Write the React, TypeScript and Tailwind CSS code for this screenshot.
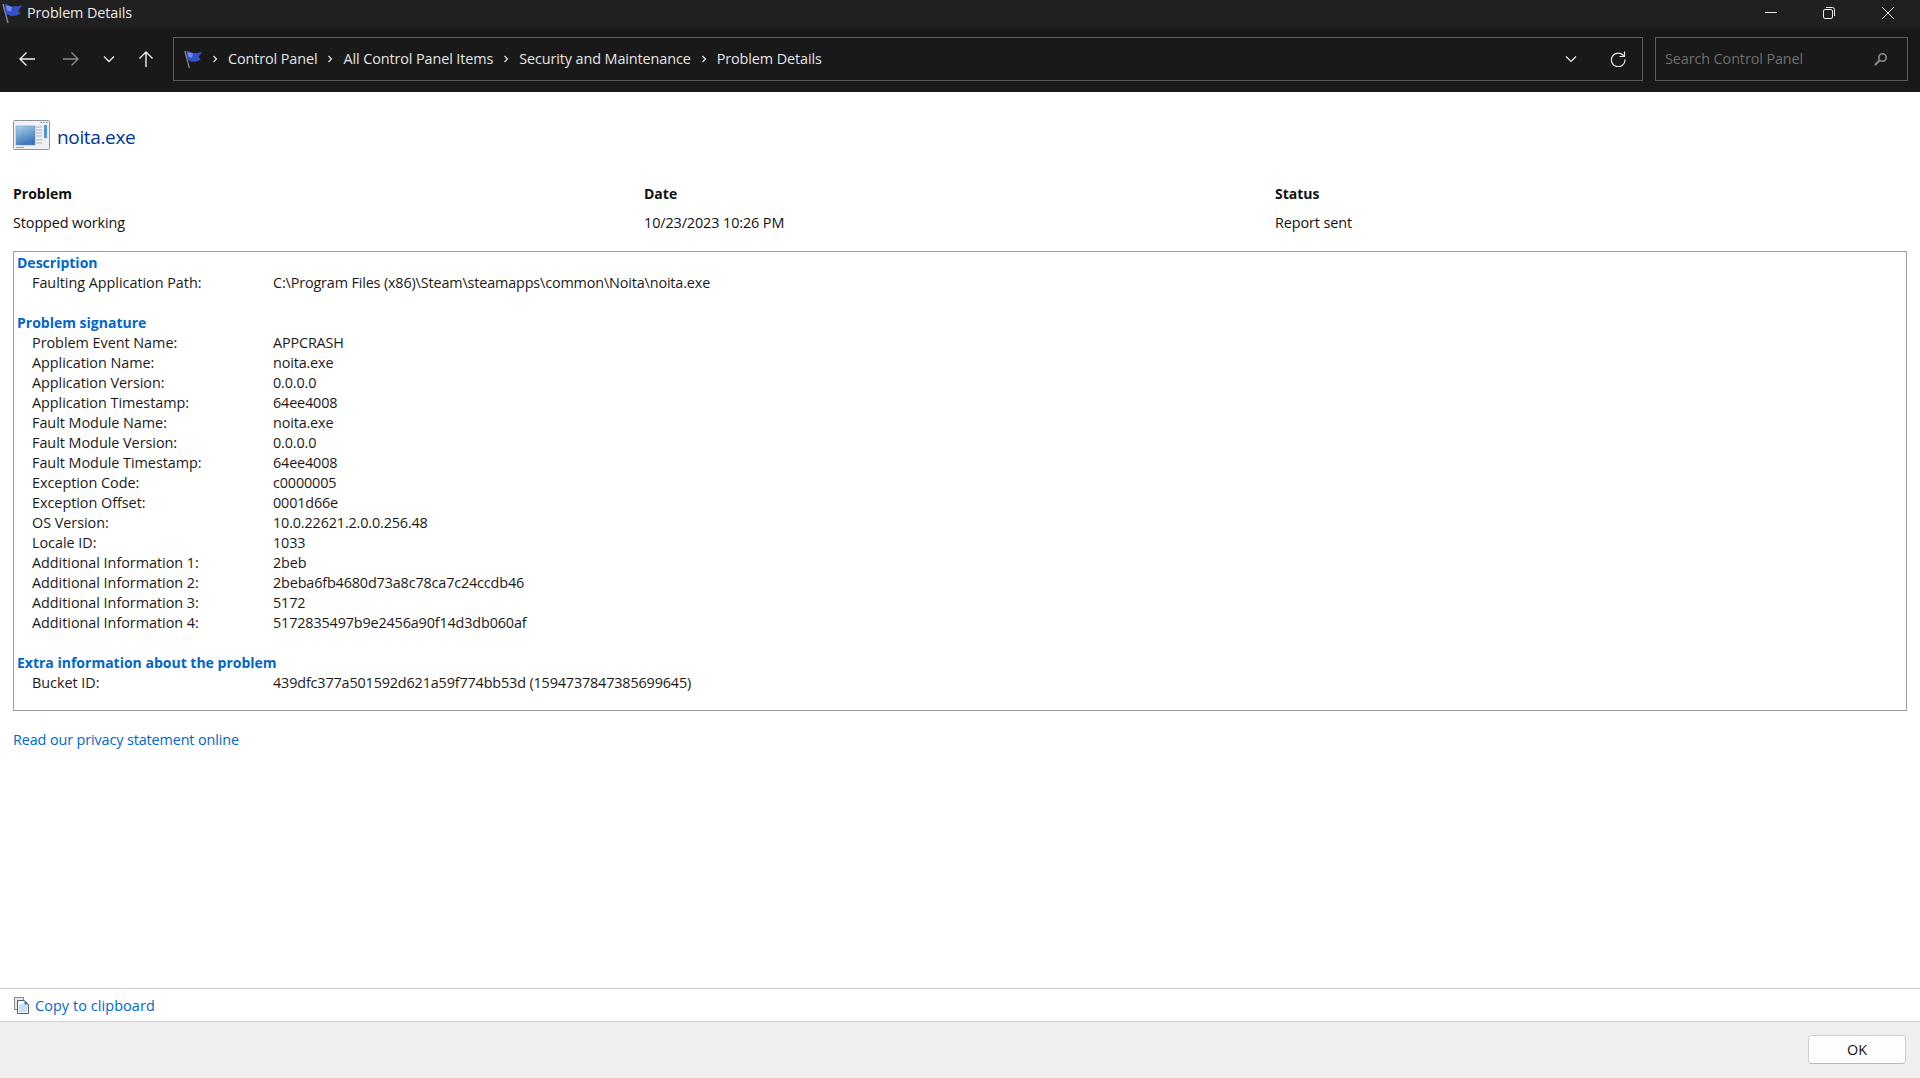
const FONT = "font-['Open_Sans','Noto_Sans',sans-serif]";

const DESCRIPTION = [["Faulting Application Path:", "C:\\Program Files (x86)\\Steam\\steamapps\\common\\Noita\\noita.exe"]];

const SIGNATURE = [
  ["Problem Event Name:", "APPCRASH"],
  ["Application Name:", "noita.exe"],
  ["Application Version:", "0.0.0.0"],
  ["Application Timestamp:", "64ee4008"],
  ["Fault Module Name:", "noita.exe"],
  ["Fault Module Version:", "0.0.0.0"],
  ["Fault Module Timestamp:", "64ee4008"],
  ["Exception Code:", "c0000005"],
  ["Exception Offset:", "0001d66e"],
  ["OS Version:", "10.0.22621.2.0.0.256.48"],
  ["Locale ID:", "1033"],
  ["Additional Information 1:", "2beb"],
  ["Additional Information 2:", "2beba6fb4680d73a8c78ca7c24ccdb46"],
  ["Additional Information 3:", "5172"],
  ["Additional Information 4:", "5172835497b9e2456a90f14d3db060af"],
];

const EXTRA = [["Bucket ID:", "439dfc377a501592d621a59f774bb53d (1594737847385699645)"]];

const CRUMBS = ["Control Panel", "All Control Panel Items", "Security and Maintenance", "Problem Details"];

function Flag({ className }: { className: string }) {
  return (
    <svg className={className} viewBox="0 0 22 22">
      <path d="M2 2l5 19" stroke="#8a8a8a" strokeWidth="1.4" fill="none" />
      <path d="M3.5 2.5c3-1.5 5 2 8.5 2 3 0 6-1 9.5-1l-4.5 5 2.5 3c-3 2.5-7 2.5-9 2.5-2.5 0-3.5-2.5-5.5-1z" fill="#3450c8" />
      <path d="M5 4c2-1 4 1 6 1l-1 4.5c-2 0-3-1-4-1z" fill="#6f8cf0" />
    </svg>
  );
}

function Chevron({ className }: { className: string }) {
  return (
    <svg className={className} viewBox="0 0 6 8" fill="none" stroke="#e4e4e4" strokeWidth="1.2">
      <path d="M1.5 1l3 3-3 3" />
    </svg>
  );
}

function AppIcon() {
  return (
    <svg className="w-[38px] h-[31px] shrink-0" viewBox="0 0 38 31">
      <defs>
        <linearGradient id="pane" x1="0" y1="0" x2="0.4" y2="1">
          <stop offset="0" stopColor="#a9d2ee" />
          <stop offset="1" stopColor="#3f78b8" />
        </linearGradient>
      </defs>
      <rect x="0.5" y="0.5" width="36" height="29" rx="1" fill="#eef0f3" stroke="#8f959c" />
      <rect x="3" y="6" width="19" height="19" fill="url(#pane)" stroke="#6e8fb0" strokeWidth="0.5" />
      <path d="M23 7h6M23 10h6M23 13h6M23 16h6M23 20h6M23 23h6" stroke="#c3c7cc" strokeWidth="1.5" />
      <rect x="31" y="5" width="3" height="13" fill="#4f94d8" />
      <path d="M27 2.5h2M30 2.5h2M33 2.5h2M3 27.5h8" stroke="#9aa0a6" strokeWidth="1" />
    </svg>
  );
}

function ClipIcon() {
  return (
    <svg className="w-[16px] h-[17px] shrink-0" viewBox="0 0 16 17">
      <rect x="0.5" y="0.5" width="9" height="12" fill="#e8e8e8" stroke="#8b8b8b" />
      <path d="M3.5 3.5h7l4 4v9h-11z" fill="#fff" stroke="#4a5a78" />
      <path d="M10.5 3.5l4 4h-4z" fill="#3b6ea8" />
      <path d="M5 8h8M5 10h8M5 12h8M5 14h8" stroke="#8cc0ea" strokeWidth="1" />
    </svg>
  );
}

function Section({ title, rows }: { title: string; rows: string[][] }) {
  return (
    <div className="mb-[20px] last:mb-0">
      <div className="h-[20px] leading-[20px] pl-[3px] font-bold text-[#0066cc] text-[14px] tracking-normal">{title}</div>
      {rows.map(([label, value]) => (
        <div key={label} className="grid grid-cols-[241px_1fr] h-[20px] leading-[20px] pl-[18px] text-[#1a1a1a]">
          <span className="tracking-[-0.03px]">{label}</span>
          <span className="tracking-[-0.15px]">{value}</span>
        </div>
      ))}
    </div>
  );
}

export default function App() {
  return (
    <div className={`${FONT} w-[1920px] h-[1078px] flex flex-col bg-white text-[14.4px] tracking-[-0.1px] overflow-hidden`}>
      {/* Title bar */}
      <div className="h-[27px] shrink-0 bg-[#202020] flex items-center pb-[2px] text-[#e8e8e8]">
        <Flag className="w-[22px] h-[22px] ml-[1px] shrink-0" />
        <span className="ml-[4px] text-[14.4px]">Problem Details</span>
        <div className="ml-auto flex items-center h-full">
          <svg className="w-[12px] h-[12px] mr-[46px]" viewBox="0 0 12 12" stroke="#e8e8e8" fill="none">
            <path d="M0 5.5h12" />
          </svg>
          <svg className="w-[12px] h-[12px] mr-[47px]" viewBox="0 0 12 12" stroke="#e8e8e8" fill="none">
            <rect x="0.5" y="2.5" width="9" height="9" rx="1.5" />
            <path d="M3 0.5h6.5a2 2 0 0 1 2 2V9" />
          </svg>
          <svg className="w-[12px] h-[12px] mr-[26px]" viewBox="0 0 12 12" stroke="#e8e8e8" fill="none">
            <path d="M0 0l12 12M12 0L0 12" />
          </svg>
        </div>
      </div>

      {/* Navigation bar */}
      <div className="h-[65px] shrink-0 bg-[#191919] flex items-center pb-[1px] text-[#e4e4e4]">
        <svg className="w-[16px] h-[16px] ml-[19px] shrink-0" viewBox="0 0 16 16" fill="none" stroke="#f0f0f0" strokeWidth="1.4">
          <path d="M16 8H1M7.5 1.5L1 8l6.5 6.5" />
        </svg>
        <svg className="w-[16px] h-[16px] ml-[28px] shrink-0" viewBox="0 0 16 16" fill="none" stroke="#8a8a8a" strokeWidth="1.4">
          <path d="M0 8h15M8.5 1.5L15 8l-6.5 6.5" />
        </svg>
        <svg className="w-[12px] h-[8px] ml-[24px] shrink-0" viewBox="0 0 12 8" fill="none" stroke="#e8e8e8" strokeWidth="1.4">
          <path d="M1 1.5l5 5 5-5" />
        </svg>
        <svg className="w-[16px] h-[16px] ml-[23px] shrink-0" viewBox="0 0 16 16" fill="none" stroke="#f0f0f0" strokeWidth="1.4">
          <path d="M8 16V1M1.5 7.5L8 1l6.5 6.5" />
        </svg>

        <div className="ml-[19px] w-[1470px] h-[44px] shrink-0 border border-[#5c5c5c] flex items-center">
          <Flag className="w-[20px] h-[20px] ml-[9px] shrink-0" />
          {CRUMBS.map((crumb) => (
            <div key={crumb} className="flex items-center">
              <Chevron className="w-[6px] h-[8px] ml-[9px] mr-[10px]" />
              <span className="mr-[1px]">{crumb}</span>
            </div>
          ))}
          <svg className="w-[12px] h-[8px] ml-auto mr-[33px]" viewBox="0 0 12 8" fill="none" stroke="#e8e8e8" strokeWidth="1.2">
            <path d="M1 1.5l5 5 5-5" />
          </svg>
          <svg className="w-[16px] h-[16px] mr-[16px]" viewBox="0 0 16 16" fill="none" stroke="#e8e8e8" strokeWidth="1.2">
            <path d="M13.8 5A6.8 6.8 0 1 0 15 8.5" />
            <path d="M14.5 0.5V5.5H9.5" />
          </svg>
        </div>

        <div className="ml-[12px] w-[253px] h-[44px] shrink-0 border border-[#5c5c5c] flex items-center pl-[9px]">
          <span className="text-[#6e6e6e]">Search Control Panel</span>
          <svg className="w-[14px] h-[14px] ml-auto mr-[19px]" viewBox="0 0 14 14" fill="none" stroke="#8c8c8c">
            <circle cx="8.5" cy="5.5" r="3.7" strokeWidth="1.6" />
            <path d="M5.5 8.5L1 13" strokeWidth="2" />
          </svg>
        </div>
      </div>

      {/* Body */}
      <div className="flex-1 min-h-0 flex flex-col pt-[28px] px-[13px]">
        <div className="flex items-center gap-[6px] h-[31px]">
          <AppIcon />
          <span className="text-[#003399] text-[19px] tracking-[-0.35px] mt-[4px]">noita.exe</span>
        </div>

        <div className="grid grid-cols-[631px_631px_1fr] mt-[33px] text-[#111]">
          <span className="font-bold h-[20px] leading-[20px] text-[14px] tracking-normal">Problem</span>
          <span className="font-bold h-[20px] leading-[20px] text-[14px] tracking-normal">Date</span>
          <span className="font-bold h-[20px] leading-[20px] text-[14px] tracking-normal">Status</span>
          <span className="mt-[9px] leading-[20px]">Stopped working</span>
          <span className="mt-[9px] leading-[20px]">10/23/2023 10:26 PM</span>
          <span className="mt-[9px] leading-[20px]">Report sent</span>
        </div>

        <div className="mt-[18px] w-[1894px] h-[460px] border border-[#a0a0a0] pt-[1px]">
          <Section title="Description" rows={DESCRIPTION} />
          <Section title="Problem signature" rows={SIGNATURE} />
          <Section title="Extra information about the problem" rows={EXTRA} />
        </div>

        <div className="mt-[19px] leading-[20px] text-[#0066cc] tracking-[-0.12px]">Read our privacy statement online</div>
      </div>

      {/* Footer */}
      <div className="h-[34px] shrink-0 border-y border-[#cfcfcf] flex items-center gap-[5px] pl-[14px] text-[#0066cc] tracking-[0.1px]">
        <ClipIcon />
        <span className="mt-[1px]">Copy to clipboard</span>
      </div>
      <div className="h-[56px] shrink-0 bg-[#efefef] flex items-center justify-end pr-[14px]">
        <button className="w-[98px] h-[29px] rounded-[4px] bg-[#fdfdfd] border border-[#d0d0d0] border-b-[#b8b8b8] text-[#111] mb-[1px]">
          OK
        </button>
      </div>
    </div>
  );
}
